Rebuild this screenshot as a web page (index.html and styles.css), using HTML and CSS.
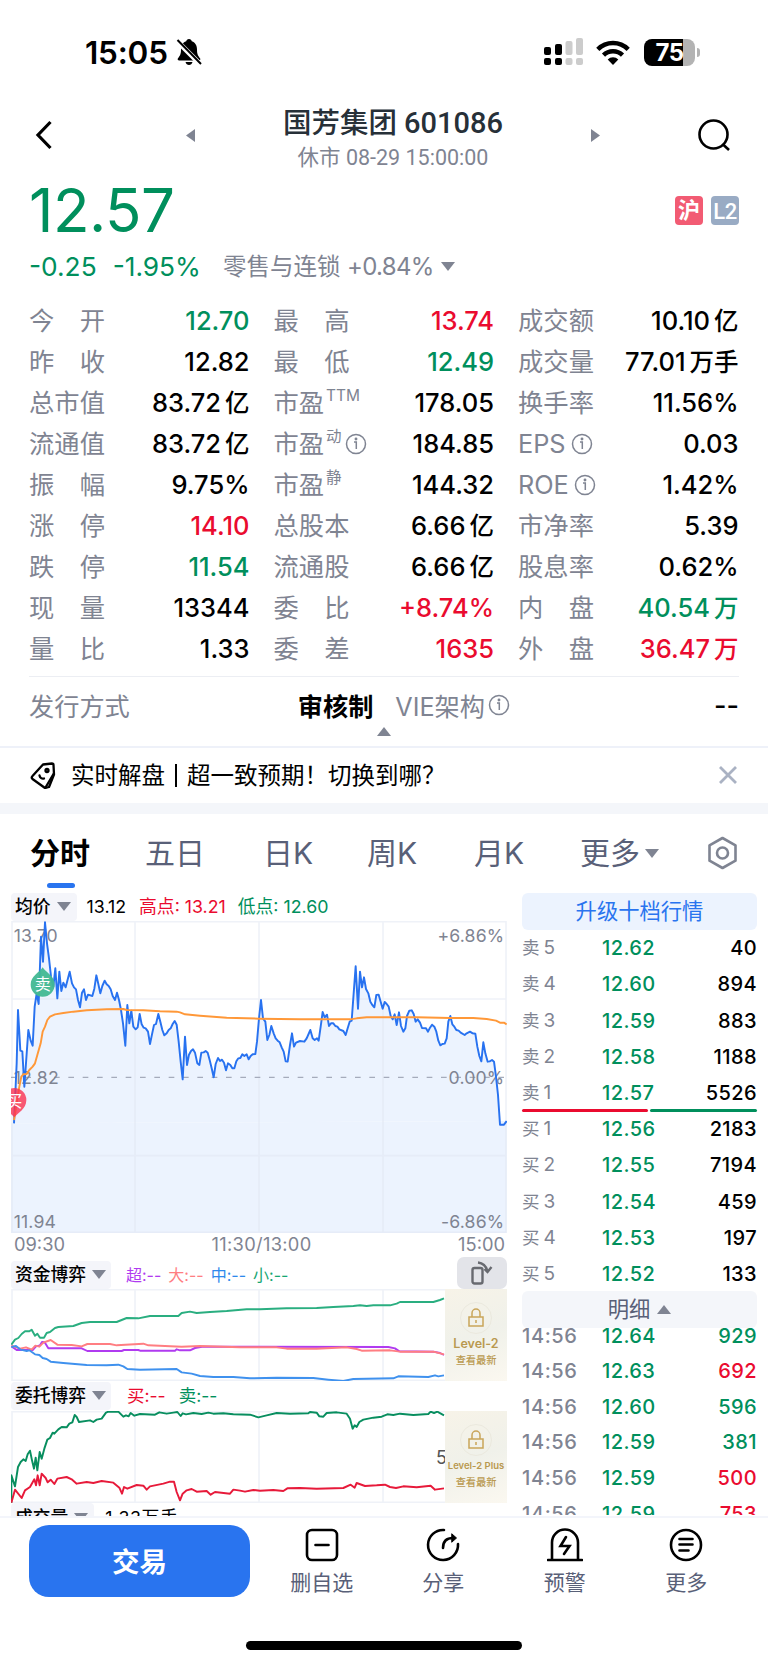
FILE: index.html
```html
<!DOCTYPE html>
<html lang="zh-CN">
<head>
    <meta charset="UTF-8">
    <meta name="viewport" content="width=device-width, initial-scale=1.0">
    <title>国芳集团 601086</title>
    <link rel="stylesheet" href="styles.css">
</head>
<body>

<!-- Status bar -->
<div class="status-bar">
    <span class="clock">15:05</span>
    <svg class="bell" width="26" height="28" viewBox="0 0 26 28">
        <path d="M13 1c1.600 0 2.600 1 2.800 2.300 3.700 1.300 5.200 4.300 5.200 8.200 0 5 1.200 6.500 3 8.700.8 1.200.2 2.300-1.200 2.300H3.200C1.800 22.500 1.200 21.400 2 20.200c1.800-2.200 3-3.700 3-8.700 0-3.900 1.500-6.900 5.200-8.200C10.400 2 11.400 1 13 1z"/>
        <path d="M9.500 24h7c-.5 2-1.800 3-3.500 3s-3-1-3.500-3z"/>
        <path d="M0 2l25 25" stroke="#fff" stroke-width="5"/>
        <path d="M1.500 2L25 26" stroke="#000" stroke-width="2"/>
    </svg>
    <svg class="signal" width="39" height="28" viewBox="0 0 39 28">
        <g fill="#000"><rect x="0" y="9" width="7" height="8" rx="2"/><rect x="0" y="20" width="7" height="7" rx="2"/><rect x="11" y="6" width="7" height="11" rx="2"/><rect x="11" y="20" width="7" height="7" rx="2"/></g>
        <g fill="#ccc"><rect x="21.500" y="3" width="7" height="14" rx="2"/><rect x="21.500" y="20" width="7" height="7" rx="2"/><rect x="32" y="0" width="7" height="17" rx="2"/><rect x="32" y="20" width="7" height="7" rx="2"/></g>
    </svg>
    <svg class="wifi" width="34" height="25" viewBox="0 0 34 25" fill="none" stroke="#000" stroke-width="4.500">
        <path d="M1.800 9.300a21.500 21.500 0 0 1 30.400 0"/>
        <path d="M7.500 15.200a13.500 13.500 0 0 1 19 0"/>
        <path d="M17 25l-5.300-5.500a7.500 7.500 0 0 1 10.600 0z" fill="#000" stroke="none"/>
    </svg>
    <div class="battery"><span>75</span></div>
    <div class="battery-cap"></div>
</div>

<!-- Title -->
<div class="header">
    <svg class="back" width="18" height="30" viewBox="0 0 18 30"><path d="M16.500 2L4 15l12.500 13" fill="none" stroke="#000" stroke-width="3.200"/></svg>
    <svg class="prev" width="9" height="13" viewBox="0 0 9 13"><path d="M9 0v13L0 6.500z" fill="#7f8492"/></svg>
    <div class="title">
        <h1>国芳集团 <span>601086</span></h1>
        <p>休市 08-29 15:00:00</p>
    </div>
    <svg class="next" width="9" height="13" viewBox="0 0 9 13"><path d="M0 0v13l9-6.500z" fill="#7f8492"/></svg>
    <svg class="search" width="34" height="34" viewBox="0 0 34 34" fill="none" stroke="#000" stroke-width="2.600"><circle cx="16.500" cy="16.500" r="14"/><path d="M25.500 26l6.500 6"/></svg>
</div>

<div class="price-row">
    <span class="price green">12.57</span>
    <div class="badges"><span class="badge hu">沪</span><span class="badge l2">L2</span></div>
</div>
<div class="change-row">
    <span class="green">-0.25</span>
    <span class="green pct">-1.95%</span>
    <span class="sector">零售与连锁 <b>+0.84%</b></span>
    <i class="tri down"></i>
</div>

<!-- Quote details -->
<div class="quotes">
    <div><label>今开</label><b class="green">12.70</b></div>
    <div><label>最高</label><b class="red">13.74</b></div>
    <div><label>成交额</label><b>10.10<em>亿</em></b></div>

    <div><label>昨收</label><b>12.82</b></div>
    <div><label>最低</label><b class="green">12.49</b></div>
    <div><label>成交量</label><b>77.01<em>万手</em></b></div>

    <div><label>总市值</label><b>83.72<em>亿</em></b></div>
    <div><label class="auto">市盈<sup>TTM</sup></label><b>178.05</b></div>
    <div><label>换手率</label><b>11.56%</b></div>

    <div><label>流通值</label><b>83.72<em>亿</em></b></div>
    <div><label class="auto">市盈<sup>动</sup></label><svg class="info" viewBox="0 0 22 22"><g id="info"><circle cx="11" cy="11" r="9.500"/><path d="M9 9h2.300v7"/><circle cx="11" cy="6" r=".7"/></g></svg><b>184.85</b></div>
    <div><label class="auto">EPS</label><svg class="info" viewBox="0 0 22 22"><use href="#info"/></svg><b>0.03</b></div>

    <div><label>振幅</label><b>9.75%</b></div>
    <div><label class="auto">市盈<sup>静</sup></label><b>144.32</b></div>
    <div><label class="auto">ROE</label><svg class="info" viewBox="0 0 22 22"><use href="#info"/></svg><b>1.42%</b></div>

    <div><label>涨停</label><b class="red">14.10</b></div>
    <div><label>总股本</label><b>6.66<em>亿</em></b></div>
    <div><label>市净率</label><b>5.39</b></div>

    <div><label>跌停</label><b class="green">11.54</b></div>
    <div><label>流通股</label><b>6.66<em>亿</em></b></div>
    <div><label>股息率</label><b>0.62%</b></div>

    <div><label>现量</label><b>13344</b></div>
    <div><label>委比</label><b class="red">+8.74%</b></div>
    <div><label>内盘</label><b class="green">40.54<em>万</em></b></div>

    <div><label>量比</label><b>1.33</b></div>
    <div><label>委差</label><b class="red">1635</b></div>
    <div><label>外盘</label><b class="red">36.47<em>万</em></b></div>
</div>

<div class="issue">
    <span class="muted">发行方式</span>
    <b class="issue-type">审核制</b>
    <span class="muted">VIE架构</span><svg class="info" viewBox="0 0 22 22"><use href="#info"/></svg>
    <b class="dash">--</b>
</div>
<div class="collapse"><i class="tri up"></i></div>

<!-- News line -->
<div class="news">
    <svg width="26" height="27" viewBox="0 0 26 27" fill="none" stroke="#000" stroke-width="2.300" stroke-linejoin="round" stroke-linecap="round">
        <path d="M13 2.500l9-1c1 0 1.500.5 1.500 1.500l.5 9.500-5 12.500-4 1L2.500 17c-1-1-1-2 0-3z"/>
        <path d="M23.500 12l-8 13.500"/><circle cx="17" cy="8.500" r="1.500"/><path d="M9.500 13.500c.5 2.500 2.500 3.500 4.500 3"/>
    </svg>
    <span>实时解盘<i></i>超一致预期！切换到哪？</span>
    <svg class="close" width="18" height="18" viewBox="0 0 18 18"><path d="M1 1l16 16M17 1L1 17" stroke="#aab2c3" stroke-width="2.800"/></svg>
</div>

<!-- Chart tabs -->
<div class="tabs">
    <span class="active">分时</span>
    <span>五日</span>
    <span>日K</span>
    <span>周K</span>
    <span>月K</span>
    <span>更多<i class="tri down"></i></span>
    <svg width="31" height="34" viewBox="0 0 31 34" fill="none" stroke="#7f8492" stroke-width="2.600" stroke-linejoin="round"><path d="M15.500 2l13 7.300v15.400L15.500 32l-13-7.300V9.300z"/><circle cx="15.500" cy="17" r="5.500"/></svg>
</div>

<div class="market">
    <!-- Charts -->
    <div class="charts">
        <div class="chart-head">
            <span class="pill">均价<i class="tri down"></i></span>
            <span class="avg">13.12</span><span class="red high">高点: 13.21</span><span class="green low">低点: 12.60</span>
        </div>
        <div class="chart main-chart">
            <svg width="496" height="312" viewBox="33 93 1488 936">
                <defs>
                    <path id="price" d="M42 700L50 520 54 360 61 482 67 484 73 590 85 420 92 452 98 467 104 350 110 310 116 342 123 140 129 215 135 97 141 160 147 205 153 260 160 290 166 235 172 325 178 245 184 303 190 278 197 292 209 245 216 280 222 292 228 298 234 330 240 352 246 308 252 298 258 330 264 314 277 318 283 296 289 256 295 282 301 310 307 288 314 272 320 283 326 288 332 298 338 318 345 330 351 308 357 330 363 360 369 400 376 467 382 345 388 400 394 362 400 410 407 418 413 412 419 372 425 403 431 413 437 415 444 425 450 462 456 433 462 405 468 402 475 372 481 395 487 420 493 436 500 430 506 420 512 415 518 402 524 393 530 404 536 455 542 515 548 568 555 440 561 525 567 494 573 483 579 478 585 488 592 520 598 525 604 488 611 487 617 483 623 488 629 510 635 535 641 562 647 522 654 504 660 513 666 509 672 518 678 541 684 520 691 525 697 535 703 535 709 514 715 505 721 504 727 493 733 498 740 493 746 508 752 498 758 493 766 492 771 455 777 385 783 330 789 385 796 395 802 450 808 435 814 408 821 430 827 445 833 452 839 457 845 472 851 485 857 514 863 515 870 465 876 430 882 470 888 458 900 453 913 455 920 445 931 420 938 445 944 450 951 445 956 452 962 410 968 366 974 382 981 374 987 408 993 400 1000 400 1006 408 1012 410 1018 418 1030 423 1037 435 1043 415 1049 395 1055 392 1061 310 1067 229 1074 356 1080 245 1086 292 1092 262 1098 297 1105 310 1111 335 1117 345 1123 352 1129 315 1136 314 1142 335 1148 356 1154 336 1160 342 1166 350 1172 378 1178 388 1184 373 1190 405 1197 367 1203 408 1210 425 1216 415 1221 378 1228 362 1235 361 1241 372 1247 395 1253 388 1260 398 1266 414 1278 415 1284 425 1290 413 1296 404 1303 410 1309 425 1315 452 1321 466 1327 462 1334 461 1340 445 1345 395 1351 378 1357 403 1363 410 1369 420 1376 422 1382 428 1394 435 1400 430 1410 425 1418 430 1426 431 1432 470 1438 498 1444 514 1450 457 1456 490 1463 515 1469 514 1476 510 1482 515 1488 560 1494 615 1500 704 1512 704 1520 693"/>
                </defs>
                <use class="area" href="#price"/>
                <path class="area" d="M33 700L1520 693V1029H33z"/>
                <path class="grid" d="M36 95H1518V1027H36zM36 327H1518M36 797H1518M405 95V1027M777 95V1027M1149 95V1027"/>
                <path class="zero" d="M33 562H1520"/>
                <text class="axis" x="41" y="155">13.70</text>
                <text class="axis" x="41" y="581">12.82</text>
                <text class="axis" x="41" y="1013">11.94</text>
                <text class="axis" x="1513" y="155" text-anchor="end">+6.86%</text>
                <text class="axis" x="1513" y="581" text-anchor="end">0.00%</text>
                <text class="axis" x="1513" y="1013" text-anchor="end">-6.86%</text>
                <use class="line blue" href="#price"/>
                <path class="line orange" d="M42 690L50 640 58 590 64 560 70 553 80 552 88 540 98 530 105 520 112 495 122 460 128 425 135 410 142 390 150 380 165 373 190 369 220 365 260 361 320 358 370 357 380 360 430 361 480 364 530 365 540 367 555 373 600 377 680 383 777 386 900 388 1050 388 1070 385 1100 382 1250 382 1350 384 1420 384 1460 387 1488 392 1500 398 1512 398 1520 403"/>
                <path class="sell-mark" d="M128 232C138 248 164 258 164 284A36 36 0 0 1 92 284C92 258 118 248 128 232z"/>
                <text class="mark" x="128" y="301">卖</text>
                <path class="buy-mark" d="M43 682C33 668 7 658 7 630A36 36 0 0 1 79 630C79 658 53 668 43 682z"/>
                <text class="mark" x="43" y="650">买</text>
            </svg>
        </div>
        <div class="times"><span>09:30</span><span>11:30/13:00</span><span>15:00</span></div>

        <div class="chart-head sub">
            <span class="pill">资金博弈<i class="tri down"></i></span>
            <span class="legend"><span class="purple">超:--</span><span class="pink">大:--</span><span class="sky">中:--</span><span class="mint">小:--</span></span>
            <span class="rotate"><svg width="22" height="24" viewBox="0 0 22 24" fill="none" stroke="#686a70" stroke-width="2.400"><rect x="1.500" y="7" width="10" height="15.500" rx="2"/><path d="M7 1.500c5 .5 8 3.500 9.500 8.500M13.500 8l3 3 4-5"/></svg></span>
        </div>
        <div class="chart small-chart">
            <svg width="496" height="92" viewBox="33 118 1488 276" preserveAspectRatio="none">
                <path class="grid" d="M36 120H1518V392H36zM405 120V392M777 120V392M1149 120V392"/>
                <path class="line mint-line" d="M34 285L45 270 55 265 65 253 75 245 88 245 95 240 105 258 112 252 120 264 132 264 140 250 150 247 165 235 175 232 220 229 245 220 270 217 350 217 380 205 415 206 450 199 535 199 545 190 570 186 590 190 630 187 680 184 740 179 780 179 860 176 950 175 1000 172 1060 169 1080 167 1100 169 1120 167 1170 167 1190 162 1200 157 1300 157 1320 151 1332 146"/>
                <path class="line purple-line" d="M34 290L50 301 98 301 108 290 120 287 126 277 134 278 145 296 245 296 262 304 365 304 372 301 415 301 420 303 525 303 530 299 540 302 570 302 585 295 610 291 1165 292 1185 296 1198 305 1300 306 1320 310 1332 316"/>
                <path class="line pink-line" d="M34 288L60 297 78 293 95 300 106 288 118 291 130 279 152 271 172 285 215 286 245 290 262 283 330 283 350 287 430 282 445 287 545 291 600 289 720 293 830 293 860 297 950 297 1040 293 1070 298 1085 303 1170 302 1200 306 1300 306 1332 314"/>
                <path class="line sky-line" d="M34 292L48 289 62 300 80 304 88 302 105 314 118 316 128 325 140 328 152 336 190 340 260 346 320 347 355 345 370 350 382 358 420 360 530 358 545 368 575 372 600 379 640 382 700 382 750 386 830 384 940 385 985 390 1030 394 1060 388 1180 386 1195 380 1285 382 1305 377 1315 380 1332 377"/>
            </svg>
            <div class="lock">
                <i><svg width="18" height="20" viewBox="0 0 18 20"><path d="M2 9h14v9H2zM5 9V5a4 4 0 0 1 8 0v4M9 12v3"/></svg></i>
                <strong>Level-2</strong><span>查看最新</span>
            </div>
        </div>

        <div class="chart-head sub second">
            <span class="pill">委托博弈<i class="tri down"></i></span>
            <span class="legend wide"><span class="red">买:--</span><span class="green">卖:--</span></span>
        </div>
        <div class="chart small-chart">
            <svg width="496" height="92" viewBox="33 482 1488 276" preserveAspectRatio="none">
                <path class="grid" d="M36 484H1518V756H36zM405 484V756M777 484V756M1149 484V756"/>
                <path class="line green-line" d="M34 757L34 675 45 708 54 650 62 635 70 627 77 632 83 612 90 601 96 630 102 655 107 622 112 660 119 605 125 625 133 595 142 568 150 563 158 547 163 550 175 537 185 530 200 531 208 520 217 516 224 494 230 500 237 515 270 510 280 515 290 508 305 505 318 487 325 484 355 484 370 499 378 495 386 498 392 488 403 496 420 491 465 493 478 486 500 490 520 487 532 485 542 497 548 489 558 492 580 488 605 491 625 487 640 490 670 489 700 492 750 493 775 501 800 495 830 488 870 490 925 489 930 485 950 487 958 498 970 499 980 488 1010 486 1040 490 1050 505 1058 535 1064 525 1070 530 1078 515 1090 508 1120 502 1145 499 1162 492 1180 494 1200 490 1240 494 1285 491 1292 484 1302 488 1312 484 1332 495"/>
                <path class="line red-line" d="M34 757L45 718 65 743 75 720 90 710 103 687 108 705 113 675 119 705 125 670 137 683 143 696 152 688 163 701 172 685 200 680 215 687 230 700 260 695 280 698 305 692 340 697 358 712 366 730 372 710 382 715 410 704 430 706 440 718 450 708 490 700 510 694 522 694 530 725 540 750 548 730 560 720 575 716 590 724 620 722 632 733 645 725 690 730 700 718 720 721 735 724 760 719 780 721 820 719 850 722 862 714 900 713 950 715 1030 713 1052 703 1064 712 1070 698 1095 707 1130 705 1155 703 1170 710 1188 713 1210 708 1250 711 1292 706 1305 718 1332 714"/>
            </svg>
            <span class="edge">5</span>
            <div class="lock">
                <i><svg width="18" height="20" viewBox="0 0 18 20"><path d="M2 9h14v9H2zM5 9V5a4 4 0 0 1 8 0v4M9 12v3"/></svg></i>
                <strong class="plus">Level-2 Plus</strong><span>查看最新</span>
            </div>
        </div>
        <div class="chart-head cut">
            <span class="pill">成交量<i class="tri down"></i></span><span class="vol">1.33万手</span>
        </div>
    </div>

    <!-- Order book -->
    <div class="book">
        <div class="book-head upgrade">升级十档行情</div>
        <div class="levels">
            <div><span>卖<s>5</s></span><b>12.62</b><b>40</b></div>
            <div><span>卖<s>4</s></span><b>12.60</b><b>894</b></div>
            <div><span>卖<s>3</s></span><b>12.59</b><b>883</b></div>
            <div><span>卖<s>2</s></span><b>12.58</b><b>1188</b></div>
            <div><span>卖<s>1</s></span><b>12.57</b><b>5526</b></div>
        </div>
        <div class="ratio"><i></i><i></i></div>
        <div class="levels">
            <div><span>买<s>1</s></span><b>12.56</b><b>2183</b></div>
            <div><span>买<s>2</s></span><b>12.55</b><b>7194</b></div>
            <div><span>买<s>3</s></span><b>12.54</b><b>459</b></div>
            <div><span>买<s>4</s></span><b>12.53</b><b>197</b></div>
            <div><span>买<s>5</s></span><b>12.52</b><b>133</b></div>
        </div>
        <div class="book-head detail">明细<i class="tri up"></i></div>
        <div class="ticks">
            <div><span>14:56</span><b>12.64</b><b class="green">929</b></div>
            <div><span>14:56</span><b>12.63</b><b class="red">692</b></div>
            <div><span>14:56</span><b>12.60</b><b class="green">596</b></div>
            <div><span>14:56</span><b>12.59</b><b class="green">381</b></div>
            <div><span>14:56</span><b>12.59</b><b class="red">500</b></div>
            <div><span>14:56</span><b>12.59</b><b class="red">753</b></div>
        </div>
    </div>
</div>

<!-- Bottom bar -->
<div class="bottom">
    <button class="trade">交易</button>
    <div class="actions">
        <div>
            <svg width="36" height="36" viewBox="0 0 36 36"><rect x="3" y="3" width="30" height="30" rx="5"/><path d="M11.500 18h13"/></svg>
            <span>删自选</span>
        </div>
        <div>
            <svg width="36" height="36" viewBox="0 0 36 36"><path d="M19 3a15 15 0 1 0 14 14"/><path d="M18 21c0-6 3-10 10-10"/><path d="M27 7l4.500 4-4.500 4z" fill="#000" stroke-width="1"/></svg>
            <span>分享</span>
        </div>
        <div>
            <svg width="36" height="36" viewBox="0 0 36 36"><path d="M1 33h34M5 33V15.500a13 13 0 0 1 26 0V33"/><path d="M19 10l-5.500 9h9L17 27"/></svg>
            <span>预警</span>
        </div>
        <div>
            <svg width="36" height="36" viewBox="0 0 36 36"><circle cx="18" cy="18" r="15"/><path d="M11.500 12h13M11.500 17.500h13M11.500 23.500h9"/></svg>
            <span>更多</span>
        </div>
    </div>
</div>
<div class="home-bar"></div>

</body>
</html>
```
FILE: styles.css
```css
* {
    box-sizing: border-box;
}
body {
    margin: 0;
    width: 768px;
    height: 1665px;
    overflow: hidden;
    background-color: #fff;
    color: #000;
    font-family: Inter, "Noto Sans CJK SC", sans-serif;
}
svg {
    display: block;
    flex: none;
}
i, em {
    font-style: normal;
}
.green {
    color: #008f5c;
}
.red {
    color: #ea0b2f;
}
.tri {
    display: inline-block;
    flex: none;
    border-left: 7px solid transparent;
    border-right: 7px solid transparent;
}
.tri.down {
    border-top: 9px solid #7f8492;
}
.tri.up {
    border-bottom: 9px solid #7f8492;
}

/* status bar */
.status-bar {
    height: 97px;
    padding: 7px 68px 0 85px;
    display: flex;
    align-items: center;
}
.clock {
    font-size: 31.500px;
    font-weight: 600;
    letter-spacing: -0.2px;
    width: 91px;
}
.signal {
    margin-left: auto;
}
.wifi {
    margin-left: 13px;
}
.battery {
    width: 51px;
    height: 27px;
    margin-left: 14px;
    border-radius: 8px;
    background: linear-gradient(to right, #000 76%, #b3b3b3 76%);
    color: #fff;
    font-size: 24px;
    font-weight: 700;
    line-height: 27px;
    text-align: center;
    letter-spacing: -0.6px;
}
.battery-cap {
    width: 3px;
    height: 9px;
    margin-left: 2px;
    background-color: #b3b3b3;
    border-radius: 0 3px 3px 0;
}

/* title */
.header {
    height: 76px;
    padding: 0 37px 0 34px;
    display: flex;
    align-items: center;
}
.prev {
    margin-left: 134px;
}
.title {
    flex: 1;
    padding-top: 8px;
    text-align: center;
    font-family: Roboto, "Noto Sans CJK SC", sans-serif;
}
.title h1 {
    margin: 0;
    font-size: 28.500px;
    line-height: 36px;
    font-weight: 500;
    color: #273038;
}
.title h1 span {
    font-weight: 500;
    font-size: 29px;
}
.title p {
    margin: 0;
    font-size: 21.500px;
    line-height: 32px;
    color: #7f8492;
}
.next {
    margin-right: 97px;
}

/* price */
.price-row {
    height: 74px;
    padding: 0 29px;
    display: flex;
    align-items: center;
    justify-content: space-between;
}
.price {
    font-size: 60px;
    font-weight: 400;
    letter-spacing: -0.5px;
    line-height: 74px;
}
.badges {
    display: flex;
    gap: 8px;
}
.badge {
    width: 28px;
    height: 29px;
    border-radius: 4px;
    color: #fff;
    font-size: 22px;
    line-height: 28px;
    text-align: center;
    font-weight: 700;
}
.hu {
    background-color: #f25b73;
}
.l2 {
    background-color: #99abc4;
    font-family: Roboto, sans-serif;
    font-weight: 500;
    line-height: 31px;
    letter-spacing: -0.5px;
}
.change-row {
    height: 38px;
    padding: 1px 29px 0;
    display: flex;
    align-items: center;
    font-size: 26.300px;
    line-height: 38px;
}
.pct {
    margin-left: 16px;
}
.sector {
    margin-left: 22px;
    color: #7f8492;
    font-size: 23.500px;
}
.sector b {
    font-weight: 400;
    font-size: 24px;
    letter-spacing: -0.700px;
}
.change-row .tri {
    margin-left: 7px;
}

/* quote details */
.quotes {
    margin: 15px 29px 0;
    display: grid;
    grid-template-columns: 220.500px 220.500px 220.500px;
    column-gap: 24px;
    grid-auto-rows: 41.100px;
    width: 710px;
}
.quotes div {
    display: flex;
    align-items: center;
}
.quotes label {
    width: 76px;
    font-size: 25.300px;
    color: #7f8492;
    text-align-last: justify;
    white-space: nowrap;
    line-height: 38px;
}
.quotes .auto {
    width: auto;
    font-size: 25.300px;
}
.quotes sup {
    font-size: 15.500px;
    line-height: 0;
    vertical-align: 11px;
    margin-left: 2px;
}
.quotes b {
    margin-left: auto;
    font-size: 25.500px;
    font-weight: 500;
    line-height: 38px;
    white-space: nowrap;
}
.quotes em {
    font-size: 24.500px;
    margin-left: 4px;
}
.info {
    width: 22px;
    height: 22px;
    margin-left: 3px;
    fill: none;
    stroke: #7f8492;
    stroke-width: 1.500;
}
.quotes .auto:not(:has(sup)) + .info {
    margin-left: 5px;
}
.issue {
    margin: 6px 29px 0;
    height: 57px;
    border-top: 1px solid #eceef3;
    display: flex;
    align-items: center;
    font-size: 25.200px;
}
.issue b {
    font-weight: 500;
}
.issue .issue-type {
    margin-left: auto;
    margin-right: 22px;
    font-weight: 700;
}
.muted {
    color: #7f8492;
}
.issue .dash {
    width: 229px;
    text-align: right;
    font-size: 27px;
    padding-top: 1px;
}
.collapse {
    height: 19px;
    margin-top: -6px;
    display: flex;
    align-items: flex-start;
    justify-content: center;
}

/* news line */
.news {
    height: 57px;
    border-top: 2px solid #eef1f9;
    padding: 0 31px 0 30px;
    display: flex;
    align-items: center;
    font-size: 23.500px;
}
.news span {
    margin-left: 15px;
    white-space: nowrap;
    padding-bottom: 2px;
}
.news i {
    display: inline-block;
    width: 2px;
    height: 23px;
    margin: 0 10px;
    background-color: #000;
    vertical-align: -3px;
}
.close {
    margin-left: auto;
}

/* tabs */
.tabs {
    height: 90px;
    border-top: 11px solid #f4f6fa;
    padding: 0 30px;
    display: grid;
    grid-template-columns: 115px 118px 104px 107px 106px 1fr 31px;
    align-items: center;
    font-size: 30px;
    line-height: 40px;
    color: #596078;
}
.tabs span {
    display: flex;
    align-items: center;
    height: 79px;
}
.tabs .active {
    position: relative;
    color: #000;
    font-weight: 700;
}
.tabs .active::after {
    content: "";
    position: absolute;
    left: 17px;
    bottom: 5px;
    width: 28px;
    height: 5px;
    border-radius: 3px;
    background-color: #2974ef;
}
.tabs .tri {
    margin-left: 5px;
}

/* charts */
.market {
    height: 623px;
    overflow: hidden;
    display: flex;
    padding: 0 11px;
    justify-content: space-between;
}
.charts {
    width: 496px;
}
.chart-head {
    height: 28px;
    display: flex;
    align-items: center;
    font-size: 17.800px;
    line-height: 26px;
    white-space: nowrap;
}
.pill {
    height: 28px;
    padding: 0 6px 0 4px;
    display: flex;
    align-items: center;
    gap: 6px;
    border-radius: 4px;
    background-color: #f4f5fa;
    font-weight: 500;
}
.avg {
    margin-left: 10px;
}
.high {
    margin-left: 13px;
}
.low {
    margin-left: 12px;
}
.chart {
    position: relative;
}
.area {
    fill: #ecf3fe;
}
.grid {
    fill: none;
    stroke: #dfe5f2;
    stroke-opacity: 0.500;
    stroke-width: 5;
}
.zero {
    stroke: #a5abbb;
    stroke-width: 4;
    stroke-dasharray: 17 26;
}
.axis {
    font-size: 53px;
    letter-spacing: 0.500px;
    fill: #7f8492;
}
.line {
    fill: none;
    stroke-width: 5.800;
    stroke-linejoin: round;
}
.blue {
    stroke: #2872f0;
}
.orange {
    stroke: #ff9838;
}
.mint-line {
    stroke: #2aae80;
}
.purple-line {
    stroke: #b03bf0;
}
.pink-line {
    stroke: #ff7e82;
}
.sky-line {
    stroke: #3f91ee;
}
.green-line {
    stroke: #088e5f;
}
.red-line {
    stroke: #e71a3a;
}
.sell-mark {
    fill: #42b892;
    fill-opacity: 0.950;
}
.buy-mark {
    fill: #fb3150;
    fill-opacity: 0.800;
}
.mark {
    fill: #fff;
    font-size: 48px;
    text-anchor: middle;
}
.times {
    height: 28px;
    padding: 0 2px 5px 3px;
    display: flex;
    justify-content: space-between;
    align-items: center;
    line-height: 24px;
    font-size: 18.300px;
    color: #7f8492;
}
.times span:nth-child(2) {
    letter-spacing: 0.300px;
}
.sub .pill {
    width: 100px;
    gap: 6px;
}
.second {
    height: 30px;
}
.legend {
    display: flex;
    gap: 7px;
    margin-left: 15px;
    font-size: 16px;
}
.legend.wide {
    font-size: 17.500px;
    gap: 13px;
    margin-left: 16px;
}
.purple {
    color: #b03bf0;
}
.pink {
    color: #ff7e82;
}
.sky {
    color: #2e88ec;
}
.mint {
    color: #16a672;
}
.rotate {
    width: 50px;
    height: 32px;
    margin: -4px 0 0 auto;
    border-radius: 7px;
    background-color: #e3e4e9;
    display: flex;
    align-items: center;
    justify-content: center;
}
.lock {
    position: absolute;
    right: 0;
    top: 0;
    width: 62px;
    height: 92px;
    padding-top: 13px;
    background: linear-gradient(160deg, #f7f3e8, #f0f1ea 50%, #fbf8f0);
    display: flex;
    flex-direction: column;
    align-items: center;
    color: #b9994f;
}
.lock i {
    width: 32px;
    height: 32px;
    border: 1px solid #ebe9de;
    border-radius: 50%;
    display: flex;
    align-items: center;
    justify-content: center;
}
.lock svg {
    fill: none;
    stroke: #c9a55a;
    stroke-width: 1.500;
}
.lock strong {
    font-size: 12.500px;
    line-height: 20px;
    font-weight: 600;
    white-space: nowrap;
}
.lock .plus {
    font-size: 9.500px;
}
.lock span {
    font-size: 10.200px;
    line-height: 13px;
    font-weight: 500;
}
.edge {
    position: absolute;
    right: 60px;
    top: 36px;
    font-size: 18px;
    line-height: 22px;
    color: #555;
}
.cut {
    align-items: flex-start;
    line-height: 29px;
}
.cut .pill {
    height: 30px;
}
.vol {
    margin-left: 11px;
    letter-spacing: 0.600px;
}

/* order book */
.book {
    width: 235px;
}
.book-head {
    height: 37px;
    border-radius: 6px;
    display: flex;
    align-items: center;
    justify-content: center;
    font-size: 21.300px;
    line-height: 37px;
}
.upgrade {
    background-color: #ecf3fe;
    color: #2974ef;
}
.detail {
    background-color: #f4f6fa;
    color: #596078;
    gap: 7px;
}
.levels div, .ticks div {
    display: grid;
    grid-template-columns: 80px 80px 1fr;
    align-items: center;
    height: 36.100px;
    font-size: 20px;
    letter-spacing: 0.400px;
}
.levels {
    height: 180.500px;
    padding-top: 0.500px;
}
.levels span {
    color: #7f8492;
    font-size: 17.500px;
    line-height: 30px;
    letter-spacing: 0;
}
.levels s {
    text-decoration: none;
    font-size: 19px;
    margin-left: 4px;
}
.levels b, .ticks b {
    font-weight: 500;
}
.levels b:nth-child(2), .ticks b:nth-child(2) {
    color: #008f5c;
}
.levels b:last-child, .ticks b:last-child {
    text-align: right;
}
.ratio {
    height: 3px;
    margin-bottom: -1px;
    margin-top: -1.500px;
    display: flex;
    gap: 2px;
    position: relative;
}
.ratio i {
    width: 126px;
    border-radius: 2px;
    background-color: #ea0b2f;
}
.ratio i:last-child {
    flex: 1;
    background-color: #008f5c;
}
.ticks {
    height: 187px;
    overflow: hidden;
    display: flex;
    flex-direction: column;
    justify-content: flex-end;
}
.ticks div {
    flex: none;
    height: 35.600px;
}
.ticks div:last-child {
    margin-bottom: -16px;
}
.ticks span {
    color: #7f8492;
    font-weight: 500;
    letter-spacing: 0.600px;
}

/* bottom bar */
.bottom {
    height: 125px;
    border-top: 2px solid #f3f5fb;
    padding: 7px 21px 0 29px;
    display: flex;
}
.trade {
    width: 221px;
    height: 72px;
    padding: 0 0 2px;
    border: none;
    border-radius: 20px;
    background-color: #2974ef;
    color: #fff;
    font-family: inherit;
    font-size: 27.500px;
    font-weight: 700;
}
.actions {
    flex: 1;
    margin-left: 11px;
    display: grid;
    grid-template-columns: repeat(4, 121.500px);
}
.actions div {
    display: flex;
    flex-direction: column;
    align-items: center;
    font-size: 21px;
    line-height: 30px;
    color: #596078;
}
.actions svg {
    fill: none;
    stroke: #000;
    stroke-width: 2.600;
    stroke-linecap: round;
    margin: 2px 0 5px;
}
.home-bar {
    width: 276px;
    height: 9px;
    margin: 0 auto;
    border-radius: 5px;
    background-color: #000;
}
```
